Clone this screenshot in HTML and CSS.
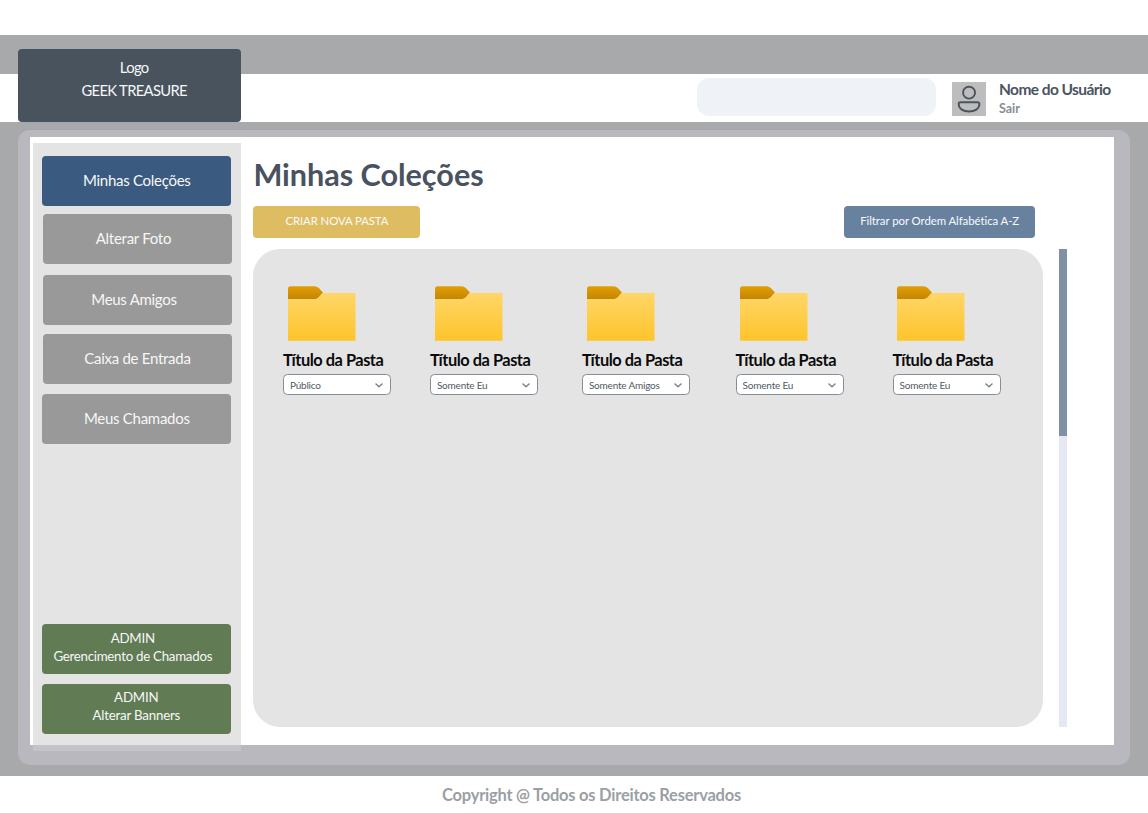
FILE: index.html
```html
<!DOCTYPE html>
<html lang="pt-BR">
<head>
<meta charset="utf-8">
<title>Minhas Coleções</title>
<link rel="stylesheet" href="styles.css">
</head>
<body>
<svg class="defs" width="0" height="0" aria-hidden="true">
  <defs>
    <linearGradient id="front" x1="0" y1="0" x2="0" y2="1"><stop offset="0" stop-color="#ffd667"/><stop offset="1" stop-color="#fec42b"/></linearGradient>
    <linearGradient id="tab" x1="0" y1="0" x2="0" y2="1"><stop offset="0" stop-color="#e19f04"/><stop offset="1" stop-color="#c58404"/></linearGradient>
    <symbol id="folder" viewBox="0 0 68 56">
      <path d="M0 3Q0 .3 2.500 .3H26.500Q29 .3 31 2.300L35 6.500L31 11.300Q29 13.200 26.500 13.200H0Z" fill="url(#tab)"/>
      <path d="M0 13.200H26.500Q29 13.200 31 11.100L34.500 7H67Q67.500 7 67.500 7.600V54.200Q67.500 54.800 67 54.800H.7Q0 54.800 0 54.200Z" fill="url(#front)"/>
    </symbol>
    <symbol id="chevron" viewBox="0 0 8 5"><path d="M1 1L4 3.800L7 1" fill="none" stroke="#7c828b" stroke-width="1.500" stroke-linecap="round" stroke-linejoin="round"/></symbol>
  </defs>
</svg>
<header class="header">
  <div class="logo"><span>Logo</span><span>GEEK TREASURE</span></div>
  <div class="header-bar">
    <div class="search"></div>
    <svg class="avatar" viewBox="0 0 34 34"><rect width="34" height="34" fill="#bdbdbe"/><g fill="none" stroke="#4b545e" stroke-width="1.900"><circle cx="16.800" cy="10.500" r="5.900"/><path d="M8.500 19.900H25.100Q27 19.900 27 21.700C27 26.500 22.300 29.100 16.800 29.100S6.600 26.500 6.600 21.700Q6.600 19.900 8.500 19.900Z"/></g></svg>
    <div class="user"><strong class="user-name">Nome do Usuário</strong><span class="logout">Sair</span></div>
  </div>
</header>
<div class="backdrop">
  <div class="frame">
    <div class="sheet">
      <nav class="sidebar">
        <a class="nav active"><span>Minhas Coleções</span></a>
        <a class="nav photo"><span>Alterar Foto</span></a>
        <a class="nav friends"><span>Meus Amigos</span></a>
        <a class="nav inbox"><span>Caixa de Entrada</span></a>
        <a class="nav tickets"><span>Meus Chamados</span></a>
        <a class="nav admin manage"><span>ADMIN</span><span>Gerencimento de Chamados</span></a>
        <a class="nav admin banners"><span>ADMIN</span><span>Alterar Banners</span></a>
      </nav>
      <main class="main">
        <h1 class="title">Minhas Coleções</h1>
        <div class="actions"><a class="button create">CRIAR NOVA PASTA</a><a class="button filter">Filtrar por Ordem Alfabética A-Z</a></div>
        <div class="content">
          <section class="folders">
            <article class="card"><svg class="folder"><use href="#folder"/></svg><h2 class="name">Título da Pasta</h2><div class="select"><span>Público</span><svg class="chevron"><use href="#chevron"/></svg></div></article>
            <article class="card"><svg class="folder"><use href="#folder"/></svg><h2 class="name">Título da Pasta</h2><div class="select"><span>Somente Eu</span><svg class="chevron"><use href="#chevron"/></svg></div></article>
            <article class="card"><svg class="folder"><use href="#folder"/></svg><h2 class="name">Título da Pasta</h2><div class="select"><span>Somente Amigos</span><svg class="chevron"><use href="#chevron"/></svg></div></article>
            <article class="card"><svg class="folder"><use href="#folder"/></svg><h2 class="name">Título da Pasta</h2><div class="select"><span>Somente Eu</span><svg class="chevron"><use href="#chevron"/></svg></div></article>
            <article class="card"><svg class="folder"><use href="#folder"/></svg><h2 class="name">Título da Pasta</h2><div class="select"><span>Somente Eu</span><svg class="chevron"><use href="#chevron"/></svg></div></article>
          </section>
          <div class="scrollbar"><div class="thumb"></div></div>
        </div>
      </main>
    </div>
  </div>
</div>
<footer class="footer">Copyright @ Todos os Direitos Reservados</footer>
</body>
</html>
```
FILE: styles.css
```css
* { box-sizing: border-box; }
body { margin: 0; height: 813px; overflow: hidden; background: #fff; font-family: Lato, sans-serif; }
h1, h2 { margin: 0; }
.defs { position: absolute; }
svg { display: block; flex: none; }

.header { display: flex; height: 122px; padding-left: 18.400px; background: linear-gradient(#fff 35.3px, #a8a9ab 35.3px, #a8a9ab 73.5px, #fff 73.5px); }
.logo { display: flex; flex-direction: column; align-items: center; width: 222.600px; height: 73.400px; margin-top: 49px; padding: 7px 0 0 9px; border-radius: 4px; background: #49535e; color: #f4f6f8; font-size: 14.800px; letter-spacing: -.68px; line-height: 23px; }
.header-bar { display: flex; flex: 1; padding: 78px 0 0 456px; }
.search { flex: none; width: 239px; height: 38px; border-radius: 12px; background: #eff2f7; }
.avatar { width: 34.500px; height: 34.500px; margin: 3.500px 0 0 16px; }
.user { display: flex; flex-direction: column; padding-left: 12.500px; }
.user-name { color: #4b5461; font-size: 15.500px; letter-spacing: -.58px; line-height: 22px; white-space: nowrap; }
.logout { color: #8a8d92; font-size: 12.500px; font-weight: 700; line-height: 18px; }

.backdrop { height: 654px; padding: 7.500px 18px 0 18.400px; background: #a8a9ab; }
.frame { height: 635.500px; padding: 7.500px 16.500px 0 11.300px; border-radius: 12px; background: #bab8bf; }
.sheet { display: flex; height: 608px; padding: 6px 0 0 3.300px; background: #fff; }
.sidebar { display: flex; flex-direction: column; flex: none; width: 208px; height: 608px; padding: 13px 0 0 9.300px; background: rgba(205, 205, 205, .536); }
.nav { display: flex; flex-direction: column; align-items: center; justify-content: center; flex: none; width: 189px; height: 49.700px; padding-bottom: 1.500px; border-radius: 4px; background: #999; color: #f7f7f7; font-size: 15px; letter-spacing: -.28px; line-height: 22px; white-space: nowrap; }
.active { background: #3b5a80; }
.photo { margin: 8.600px 0 0 .7px; padding-right: 8px; }
.friends { margin: 11px 0 0 .7px; padding-right: 7px; }
.inbox { margin: 9.500px 0 0 .7px; }
.tickets { margin-top: 10px; }
.admin { background: #617b54; font-size: 13.300px; letter-spacing: -.2px; line-height: 18px; padding-bottom: 4px; }
.manage { margin-top: auto; padding-right: 8px; letter-spacing: -.27px; }
.banners { margin: 10.300px 0 17.500px; padding: 0 1px 6px 0; }

.main { flex: 1; padding: 13px 0 0 12.400px; }
.title { color: #49525f; font-size: 30.600px; letter-spacing: -.03px; line-height: 38px; }
.actions { display: flex; justify-content: space-between; width: 781.800px; margin-top: 11.600px; }
.button { display: flex; align-items: center; justify-content: center; height: 32px; padding-bottom: 2px; border-radius: 4px; color: #f8fafc; font-size: 11.400px; letter-spacing: -.1px; white-space: nowrap; }
.create { width: 167px; background: #debc62; }
.filter { width: 191px; background: #67819f; letter-spacing: -.06px; }
.content { display: flex; gap: 16px; margin-top: 11.400px; }
.folders { display: grid; grid-template-columns: 147px 152px 153.700px 157px 108px; align-content: start; width: 789.800px; height: 478px; padding: 37px 0 0 29.500px; border-radius: 27px; background: #e4e4e4; }
.card { width: 108px; }
.folder { width: 68px; height: 56px; margin-left: 4.700px; }
.name { margin-top: 7px; color: #0b0b0c; font-size: 16.400px; letter-spacing: -.48px; line-height: 22px; white-space: nowrap; }
.select { display: flex; align-items: center; justify-content: space-between; height: 20.500px; margin-top: 3.500px; padding: 0 7px 0 6px; border: 1px solid #858d98; border-radius: 4.500px; background: #fff; color: #515964; font-size: 10px; letter-spacing: -.2px; }
.chevron { width: 8px; height: 5px; margin-top: 1px; }
.scrollbar { width: 8px; height: 478px; background: #e4e8f2; }
.thumb { height: 187px; background: #8090a5; }
.footer { padding: 7px 0 0 35px; color: #9b9fa5; font-size: 16.500px; letter-spacing: -.24px; font-weight: 700; line-height: 25px; text-align: center; }
```
